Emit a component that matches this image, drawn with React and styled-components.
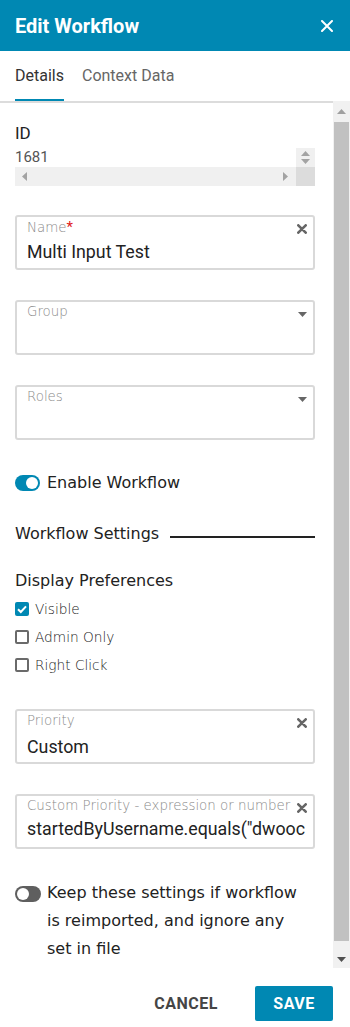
import React from 'react';
import styled, { createGlobalStyle } from 'styled-components';

const TEAL = '#0088b3';
const GEO = '"DejaVu Sans", "Open Sans", sans-serif';
const ROBOTO = 'Roboto, "Liberation Sans", sans-serif';

const GlobalStyle = createGlobalStyle`
	html, body {
		margin: 0;
		padding: 0;
		background: #fff;
	}
	body {
		font-family: ${ROBOTO};
	}
	* {
		box-sizing: border-box;
	}
`;

const CloseIcon = () => (
	<svg width='12' height='12' viewBox='0 0 12 12'>
		<path d='M1 1L11 11M11 1L1 11' stroke='#fff' strokeWidth='2' strokeLinecap='round' />
	</svg>
);

const ClearIcon = () => (
	<svg width='10' height='10' viewBox='0 0 10 10'>
		<path d='M1.3 1.3L8.7 8.7M8.7 1.3L1.3 8.7' stroke='#666' strokeWidth='2.6' strokeLinecap='round' />
	</svg>
);

const CaretIcon = () => (
	<svg width='9' height='5' viewBox='0 0 9 5'>
		<path d='M0 0H9L4.5 5Z' fill='#666' />
	</svg>
);

const Arrow = ({ dir, size = 9, color = '#a3a3a3' }) => {
	const paths = {
		up: 'M0 5H9L4.5 0Z',
		down: 'M0 0H9L4.5 5Z',
		left: 'M5 0V9L0 4.5Z',
		right: 'M0 0V9L5 4.5Z',
	};
	const vertical = dir === 'up' || dir === 'down';
	return (
		<svg
			width={vertical ? size : 5}
			height={vertical ? 5 : size}
			viewBox={vertical ? '0 0 9 5' : '0 0 5 9'}
		>
			<path d={paths[dir]} fill={color} />
		</svg>
	);
};

const Field = ({ label, required, value, action, $mt, $valueTop }) => (
	<FieldBox $mt={$mt}>
		<FieldLabel>
			{label}
			{required && <Required>*</Required>}
		</FieldLabel>
		{value && <FieldValue $top={$valueTop}>{value}</FieldValue>}
		<FieldAction $top={action === 'clear' ? 7 : 10}>
			{action === 'clear' ? <ClearIcon /> : <CaretIcon />}
		</FieldAction>
	</FieldBox>
);

const Checkbox = ({ checked, label }) => (
	<CheckRow>
		<CheckBoxMark $checked={checked}>
			{checked && (
				<svg width='14' height='14' viewBox='0 0 14 14'>
					<path d='M3 7.2L5.8 10L11 4.3' stroke='#fff' strokeWidth='2' fill='none' />
				</svg>
			)}
		</CheckBoxMark>
		{label}
	</CheckRow>
);

const App = () => {
	return (
		<>
			<GlobalStyle />
			<Panel>
				<Header>
					<Title>Edit Workflow</Title>
					<CloseButton>
						<CloseIcon />
					</CloseButton>
				</Header>
				<TabBar>
					<Tab $active>Details</Tab>
					<Tab>Context Data</Tab>
				</TabBar>
				<Body>
					<Content>
						<IdLabel>ID</IdLabel>
						<IdBox>
							<IdValue>1681</IdValue>
							<Spinner>
								<Arrow dir='up' />
								<Arrow dir='down' />
							</Spinner>
							<HScroll>
								<Arrow dir='left' />
								<Arrow dir='right' />
							</HScroll>
							<Corner />
						</IdBox>

						<Field label='Name' required value='Multi Input Test' action='clear' $mt={29} $valueTop={5} />
						<Field label='Group' action='select' $mt={30} />
						<Field label='Roles' action='select' $mt={30} />

						<ToggleRow>
							<Switch $on />
							Enable Workflow
						</ToggleRow>

						<SettingsHeading>Workflow Settings</SettingsHeading>
						<SubHeading>Display Preferences</SubHeading>
						<CheckList>
							<Checkbox checked label='Visible' />
							<Checkbox label='Admin Only' />
							<Checkbox label='Right Click' />
						</CheckList>

						<Field label='Priority' value='Custom' action='clear' $mt={30} $valueTop={7} />
						<Field
							label='Custom Priority - expression or number'
							value='startedByUsername.equals("dwooc'
							action='clear'
							$mt={30}
							$valueTop={4}
						/>

						<KeepRow>
							<Switch />
							<KeepText>Keep these settings if workflow is reimported, and ignore any set in file</KeepText>
						</KeepRow>
					</Content>
					<Scrollbar>
						<ScrollButton $h={20}>
							<Arrow dir='up' color='#a0a0a0' />
						</ScrollButton>
						<Thumb />
						<ScrollButton $h={18}>
							<Arrow dir='down' color='#505050' />
						</ScrollButton>
					</Scrollbar>
				</Body>
				<Footer>
					<CancelButton>CANCEL</CancelButton>
					<SaveButton>SAVE</SaveButton>
				</Footer>
			</Panel>
		</>
	);
};

export default App;

const Panel = styled.div`
	width: 350px;
	height: 1027px;
	display: flex;
	flex-direction: column;
	background: #fff;
	overflow: hidden;
`;

const Header = styled.header`
	height: 51px;
	flex-shrink: 0;
	background: ${TEAL};
	display: flex;
	align-items: center;
	justify-content: space-between;
	padding: 0 17px 0 15px;
`;

const Title = styled.h1`
	margin: 0;
	font-family: ${ROBOTO};
	font-weight: 700;
	font-size: 20px;
	color: #fff;
`;

const CloseButton = styled.button`
	display: flex;
	padding: 0;
	border: none;
	background: none;
	cursor: pointer;
`;

const TabBar = styled.nav`
	height: 50px;
	flex-shrink: 0;
	display: flex;
	gap: 18px;
	padding-left: 15px;
`;

const Tab = styled.div`
	height: 50px;
	display: flex;
	align-items: center;
	font-size: 16px;
	color: ${(p) => (p.$active ? '#333' : '#666')};
	border-bottom: 2px solid ${(p) => (p.$active ? TEAL : 'transparent')};
	padding-top: 1px;
`;

const Body = styled.div`
	flex: 1;
	min-height: 0;
	display: flex;
`;

const Content = styled.div`
	flex: 1;
	display: flex;
	flex-direction: column;
	border-top: 2px solid #dcdcdc;
	padding: 0 18px 0 15px;
	overflow: hidden;
`;

const Scrollbar = styled.div`
	width: 17px;
	display: flex;
	flex-direction: column;
	background: #f1f1f1;
`;

const ScrollButton = styled.div`
	height: ${(p) => p.$h}px;
	display: flex;
	align-items: center;
	justify-content: center;
`;

const Thumb = styled.div`
	flex: 1;
	margin: 1px 1px 9px;
	background: #c1c1c1;
`;

const IdLabel = styled.div`
	margin-top: 20px;
	font-size: 17px;
	line-height: 20px;
	color: #222;
`;

const IdBox = styled.div`
	margin-top: 5px;
	display: grid;
	grid-template-columns: 1fr 19px;
	grid-template-rows: 19px 19px;
`;

const IdValue = styled.div`
	font-size: 15px;
	line-height: 19px;
	color: #555;
`;

const Spinner = styled.div`
	background: #f0f0f0;
	display: flex;
	flex-direction: column;
	align-items: center;
	justify-content: center;
	gap: 3px;
`;

const HScroll = styled.div`
	background: #f0f0f0;
	display: flex;
	align-items: center;
	justify-content: space-between;
	padding: 0 8px 0 7px;
`;

const Corner = styled.div`
	background: #dcdcdc;
`;

const FieldBox = styled.div`
	position: relative;
	margin-top: ${(p) => p.$mt}px;
	height: 55px;
	flex-shrink: 0;
	border: 2px solid #d9d9d9;
	border-radius: 3px;
	padding: 2px 3px 0 10px;
`;

const FieldLabel = styled.div`
	font-family: ${GEO};
	font-weight: 200;
	font-size: 13.4px;
	line-height: 16px;
	color: #8a8a8a;
	white-space: nowrap;
	overflow: hidden;
	padding-right: 12px;
`;

const Required = styled.span`
	color: #e0201b;
	font-family: ${ROBOTO};
	font-weight: 400;
	font-size: 15px;
`;

const FieldValue = styled.div`
	margin-top: ${(p) => p.$top}px;
	font-size: 17.8px;
	line-height: 22px;
	color: #222;
	white-space: nowrap;
	overflow: hidden;
`;

const FieldAction = styled.div`
	position: absolute;
	top: ${(p) => p.$top}px;
	right: 6px;
	display: flex;
	background: #fff;
`;

const ToggleRow = styled.div`
	margin-top: 33px;
	display: flex;
	align-items: center;
	gap: 7px;
	font-family: ${GEO};
	font-size: 16px;
	line-height: 20px;
	color: #222;
`;

const Switch = styled.span`
	position: relative;
	flex-shrink: 0;
	width: 25px;
	height: 16px;
	border-radius: 8px;
	background: ${(p) => (p.$on ? TEAL : '#5f5f5f')};

	&::after {
		content: '';
		position: absolute;
		top: 2px;
		left: ${(p) => (p.$on ? '11px' : '2px')};
		width: 12px;
		height: 12px;
		border-radius: 50%;
		background: #fff;
	}
`;

const SettingsHeading = styled.div`
	margin-top: 31px;
	display: flex;
	align-items: center;
	gap: 11px;
	font-family: ${GEO};
	font-size: 16px;
	line-height: 20px;
	color: #222;

	&::after {
		content: '';
		flex: 1;
		height: 2px;
		margin-top: 6px;
		background: #222;
	}
`;

const SubHeading = styled.div`
	margin-top: 27px;
	font-family: ${GEO};
	font-size: 16px;
	line-height: 20px;
	color: #222;
`;

const CheckList = styled.div`
	margin-top: 4px;
	display: flex;
	flex-direction: column;
`;

const CheckRow = styled.label`
	height: 28px;
	display: flex;
	align-items: center;
	gap: 6px;
	font-family: ${GEO};
	font-weight: 200;
	font-size: 13.7px;
	color: #222;
`;

const CheckBoxMark = styled.span`
	width: 14px;
	height: 14px;
	flex-shrink: 0;
	display: flex;
	border-radius: 2px;
	background: ${(p) => (p.$checked ? TEAL : '#fff')};
	border: ${(p) => (p.$checked ? 'none' : '2px solid #6a6a6a')};
`;

const KeepRow = styled.div`
	margin-top: 30px;
	display: flex;
	align-items: flex-start;
	gap: 6px;

	& > span {
		margin-top: 7px;
		width: 26px;
	}
`;

const KeepText = styled.div`
	max-width: 260px;
	font-family: ${GEO};
	font-size: 16px;
	line-height: 28px;
	color: #222;
`;

const Footer = styled.footer`
	height: 59px;
	flex-shrink: 0;
	display: flex;
	justify-content: flex-end;
	align-items: flex-start;
	gap: 21px;
	padding: 18px 17px 0;
`;

const CancelButton = styled.button`
	height: 35px;
	padding: 0 16px;
	border: none;
	background: none;
	font-family: ${ROBOTO};
	font-weight: 700;
	font-size: 16px;
	letter-spacing: 0.5px;
	color: #454545;
	cursor: pointer;
`;

const SaveButton = styled.button`
	width: 78px;
	height: 35px;
	border: none;
	border-radius: 2px;
	background: ${TEAL};
	color: #fff;
	font-family: ${ROBOTO};
	font-weight: 700;
	font-size: 16px;
	letter-spacing: 0.5px;
	cursor: pointer;
`;
